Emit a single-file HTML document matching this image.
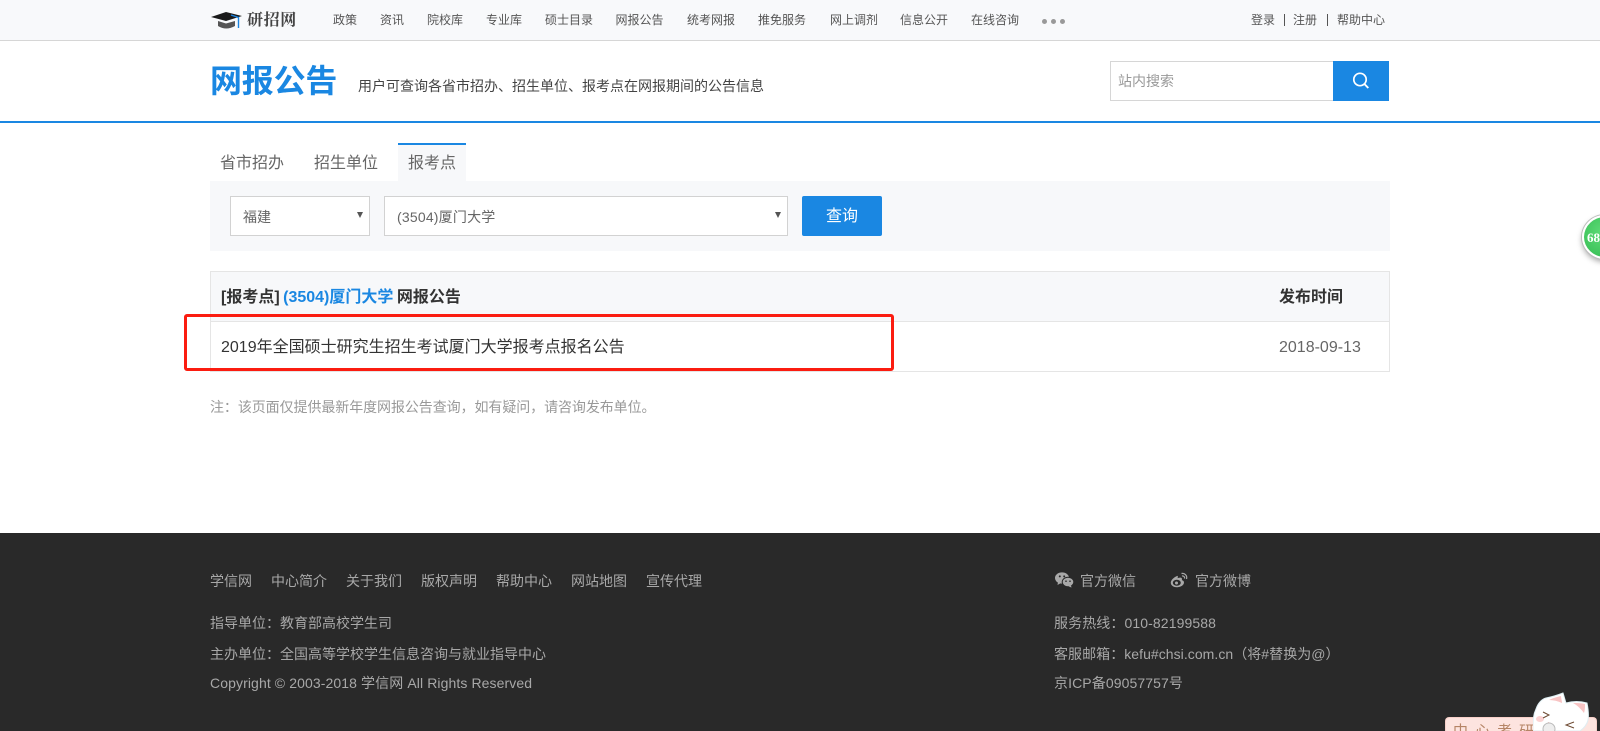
<!DOCTYPE html>
<html lang="zh">
<head>
<meta charset="utf-8">
<title>网报公告</title>
<style>
*{box-sizing:border-box}
html,body{margin:0;padding:0;width:1600px;height:731px;overflow:hidden}
#w{position:absolute;left:0;top:0;width:1600px;height:731px;overflow:hidden;background:#fff;font-family:"Liberation Sans","Noto Sans CJK SC",sans-serif;color:#333}
.a{position:absolute;white-space:nowrap}
.nav{font-size:12px;line-height:16px;top:12px;color:#555}
.ft{font-size:14px;line-height:20px;color:#a8a8a8}
.ls{letter-spacing:.1px}
</style>
</head>
<body>
<div id="w">
<div class="a" style="left:0;top:0;width:1600px;height:41px;background:#f8f9fb;border-bottom:1px solid #d6d6d6"></div>

<svg class="a" style="left:211px;top:11px" width="32" height="20" viewBox="0 0 32 20">
<path d="M0 6 L15 1 L31 5 L15 10 Z" fill="#1a1a1a"/>
<path d="M7 10 L15 12.5 L24 10 L24 15 Q15 20 7 15 Z" fill="#555"/>
<path d="M20 4 L27.5 6.5 L27.5 17" fill="none" stroke="#1a84e0" stroke-width="1.4"/>
</svg>
<div class="a" style="left:247px;top:9px;font:bold 16px/20px 'Noto Serif CJK SC',serif;color:#444;letter-spacing:.6px">研招网</div>

<div class="a nav" style="left:333px">政策</div>
<div class="a nav" style="left:380px">资讯</div>
<div class="a nav" style="left:427px">院校库</div>
<div class="a nav" style="left:486px">专业库</div>
<div class="a nav" style="left:545px">硕士目录</div>
<div class="a nav" style="left:615.5px">网报公告</div>
<div class="a nav" style="left:687px">统考网报</div>
<div class="a nav" style="left:758px">推免服务</div>
<div class="a nav" style="left:830px">网上调剂</div>
<div class="a nav" style="left:900px">信息公开</div>
<div class="a nav" style="left:971px">在线咨询</div>
<div class="a" style="left:1042px;top:19px;width:5px;height:5px;border-radius:50%;background:#999"></div>
<div class="a" style="left:1051px;top:19px;width:5px;height:5px;border-radius:50%;background:#999"></div>
<div class="a" style="left:1060px;top:19px;width:5px;height:5px;border-radius:50%;background:#999"></div>

<div class="a nav" style="left:1251px">登录</div>
<div class="a" style="left:1284px;top:14px;width:1px;height:12px;background:#555"></div>
<div class="a nav" style="left:1293px">注册</div>
<div class="a" style="left:1327px;top:14px;width:1px;height:12px;background:#555"></div>
<div class="a nav" style="left:1337px">帮助中心</div>

<div class="a" style="left:210px;top:61px;font-size:32px;font-weight:bold;line-height:40px;color:#1a87e2;letter-spacing:-.2px">网报公告</div>
<div class="a" style="left:358px;top:76px;font-size:14px;line-height:20px;color:#444">用户可查询各省市招办、招生单位、报考点在网报期间的公告信息</div>

<div class="a" style="left:1110px;top:61px;width:223px;height:40px;border:1px solid #d6d6d6;border-right:0;background:#fff"></div>
<div class="a" style="left:1118px;top:71px;font-size:14px;line-height:20px;color:#999">站内搜索</div>
<div class="a" style="left:1333px;top:61px;width:56px;height:40px;background:#1a87e2"></div>
<svg class="a" style="left:1351px;top:71px" width="20" height="20" viewBox="0 0 20 20">
<circle cx="9" cy="8.5" r="6.2" fill="none" stroke="#fff" stroke-width="1.7"/>
<path d="M13.4 13 L17.3 17" stroke="#fff" stroke-width="1.9" fill="none"/>
</svg>

<div class="a" style="left:0;top:121px;width:1600px;height:2px;background:#1a87e2"></div>

<div class="a" style="left:398px;top:143px;width:68px;height:38px;background:#f7f8fa;border-top:2px solid #1a87e2"></div>
<div class="a" style="left:220px;top:153px;font-size:16px;line-height:22px;color:#666">省市招办</div>
<div class="a" style="left:314px;top:153px;font-size:16px;line-height:22px;color:#666">招生单位</div>
<div class="a" style="left:408px;top:153px;font-size:16px;line-height:22px;color:#666">报考点</div>

<div class="a" style="left:210px;top:181px;width:1180px;height:70px;background:#f7f8fa"></div>
<div class="a" style="left:230px;top:196px;width:140px;height:40px;background:#fff;border:1px solid #d2d2d2"></div>
<div class="a" style="left:243px;top:207px;font-size:14px;line-height:20px;color:#666">福建</div>
<div class="a" style="left:357px;top:212px;width:0;height:0;border-left:3px solid transparent;border-right:3px solid transparent;border-top:6px solid #555"></div>
<div class="a" style="left:384px;top:196px;width:404px;height:40px;background:#fff;border:1px solid #d2d2d2"></div>
<div class="a" style="left:397px;top:207px;font-size:14px;line-height:20px;color:#666;letter-spacing:.2px">(3504)厦门大学</div>
<div class="a" style="left:775px;top:212px;width:0;height:0;border-left:3px solid transparent;border-right:3px solid transparent;border-top:6px solid #555"></div>
<div class="a" style="left:802px;top:196px;width:80px;height:40px;background:#1a87e2;border-radius:2px;color:#fff;font-size:16px;line-height:41px;text-align:center">查询</div>

<div class="a" style="left:210px;top:271px;width:1180px;height:101px;border:1px solid #e5e5e5"></div>
<div class="a" style="left:211px;top:272px;width:1178px;height:50px;background:#f7f8fa;border-bottom:1px solid #e5e5e5"></div>
<div class="a" style="left:221px;top:287px;font-size:16px;font-weight:bold;line-height:22px;color:#333;word-spacing:-1px">[报考点] <span style="color:#1a87e2">(3504)厦门大学</span> 网报公告</div>
<div class="a" style="left:1279px;top:287px;font-size:16px;font-weight:bold;line-height:22px;color:#333">发布时间</div>
<div class="a" style="left:221px;top:337px;font-size:16px;line-height:22px;color:#333">2019年全国硕士研究生招生考试厦门大学报考点报名公告</div>
<div class="a" style="left:1279px;top:337px;font-size:16px;line-height:22px;color:#666">2018-09-13</div>

<div class="a" style="left:184px;top:314px;width:710px;height:57px;border:3px solid #fb1c10;border-radius:3px"></div>

<div class="a" style="left:210px;top:397px;font-size:14px;line-height:20px;color:#999;letter-spacing:-.08px">注：该页面仅提供最新年度网报公告查询，如有疑问，请咨询发布单位。</div>

<div class="a" style="left:1582px;top:215px;width:46px;height:44px;border-radius:50%;background:radial-gradient(circle at 45% 40%,#5fdc78,#2fb84e);border:2px solid #fff;box-shadow:0 0 0 1px #bbb,0 3px 6px rgba(0,0,0,.35);color:#fff;font:bold 13px/42px 'Liberation Serif',serif;padding-left:3px">68</div>

<div class="a" style="left:0;top:533px;width:1600px;height:198px;background:#292929"></div>
<div class="a ft" style="left:210px;top:570.5px">学信网</div>
<div class="a ft" style="left:271px;top:570.5px">中心简介</div>
<div class="a ft" style="left:346px;top:570.5px">关于我们</div>
<div class="a ft" style="left:421px;top:570.5px">版权声明</div>
<div class="a ft" style="left:496px;top:570.5px">帮助中心</div>
<div class="a ft" style="left:571px;top:570.5px">网站地图</div>
<div class="a ft" style="left:646px;top:570.5px">宣传代理</div>
<div class="a ft" style="left:210px;top:613px">指导单位：教育部高校学生司</div>
<div class="a ft" style="left:210px;top:644px">主办单位：全国高等学校学生信息咨询与就业指导中心</div>
<div class="a ft ls" style="left:210px;top:673px">Copyright © 2003-2018 学信网 All Rights Reserved</div>

<svg class="a" style="left:1055px;top:572px" width="19" height="16" viewBox="0 0 19 16">
<ellipse cx="7" cy="6" rx="7" ry="5.6" fill="#a8a8a8"/>
<path d="M3 10 L2.5 13 L6 11 Z" fill="#a8a8a8"/>
<ellipse cx="13" cy="10" rx="5.8" ry="4.8" fill="#a8a8a8" stroke="#292929" stroke-width="1"/>
<path d="M16 13.5 L16.5 15.5 L13.5 14.5 Z" fill="#a8a8a8"/>
<circle cx="4.8" cy="4.4" r="1" fill="#292929"/><circle cx="9.2" cy="4.4" r="1" fill="#292929"/>
<circle cx="11" cy="9.2" r=".8" fill="#292929"/><circle cx="15" cy="9.2" r=".8" fill="#292929"/>
</svg>
<div class="a ft" style="left:1080px;top:570.5px">官方微信</div>
<svg class="a" style="left:1170px;top:572px" width="18" height="16" viewBox="0 0 18 16">
<path d="M7 4 C3.5 5.5 .5 8.5 .8 11 C1 14 4.5 15.5 7.5 15.2 C11 15 14 13 14 10.5 C14 9 12.8 8.4 11.8 8.1 C12.3 6.8 12 5.6 10.2 5.6 C9 5.6 8 6 7.6 6.2 C8 4.8 8 3.6 7 4 Z" fill="#a8a8a8"/>
<ellipse cx="6.8" cy="10.8" rx="4" ry="3" fill="#292929"/>
<circle cx="6.5" cy="11" r="1.5" fill="#a8a8a8"/>
<path d="M11.5 1.5 C14.5 .8 17.5 3.5 16.5 7 M12 4 C13.7 3.6 15 5 14.5 6.6" fill="none" stroke="#a8a8a8" stroke-width="1.2"/>
</svg>
<div class="a ft" style="left:1195px;top:570.5px">官方微博</div>
<div class="a ft ls" style="left:1054px;top:613px">服务热线：010-82199588</div>
<div class="a ft" style="left:1054px;top:644px;letter-spacing:.05px">客服邮箱：kefu#chsi.com.cn（将#替换为@）</div>
<div class="a ft ls" style="left:1054px;top:673px">京ICP备09057757号</div>

<div class="a" style="left:1445px;top:717px;width:152px;height:14px;background:#fde4df;border:1px solid #f6cfc8;border-bottom:0;border-radius:4px 4px 0 0;overflow:hidden">
<div class="a" style="left:7px;top:5px;font-size:15px;line-height:18px;color:#b58465;letter-spacing:7px">中心考研</div>
</div>
<svg class="a" style="left:1533px;top:691px" width="58" height="40" viewBox="0 0 58 40">
<path d="M0 40 C0 30 0 24 3 18 C5 12 9 8 13 7 C18 6 25 4 30 2 C31 5 32 9 33 12 C40 10 47 10 54 12 C55 17 56 24 55 29 C54 34 51 37 47 40 Z" fill="#fff" stroke="#dfeef2" stroke-width="1"/>
<path d="M16 9 C20 7 24 6 28 5 C28 7 29 10 29 12 C25 10 20 9 16 9 Z" fill="#f8c4c4"/>
<path d="M40 12 C44 12 48 12 52 13 C52 16 52 19 51 22 C48 18 44 14 40 12 Z" fill="#f8c4c4"/>
<ellipse cx="7" cy="28" rx="4" ry="3" fill="#fbd2d2"/>
<path d="M10 21 L16 24 L10 27 M41 31 L33 34 L41 37" fill="none" stroke="#6e4a32" stroke-width="1"/>
<path d="M15 31 L20 33 L17 36 Z" fill="#f29a9a"/>
<circle cx="16" cy="38" r="6" fill="#eee" stroke="#bbb" stroke-width="1"/>
</svg>
</div>
</body>
</html>
